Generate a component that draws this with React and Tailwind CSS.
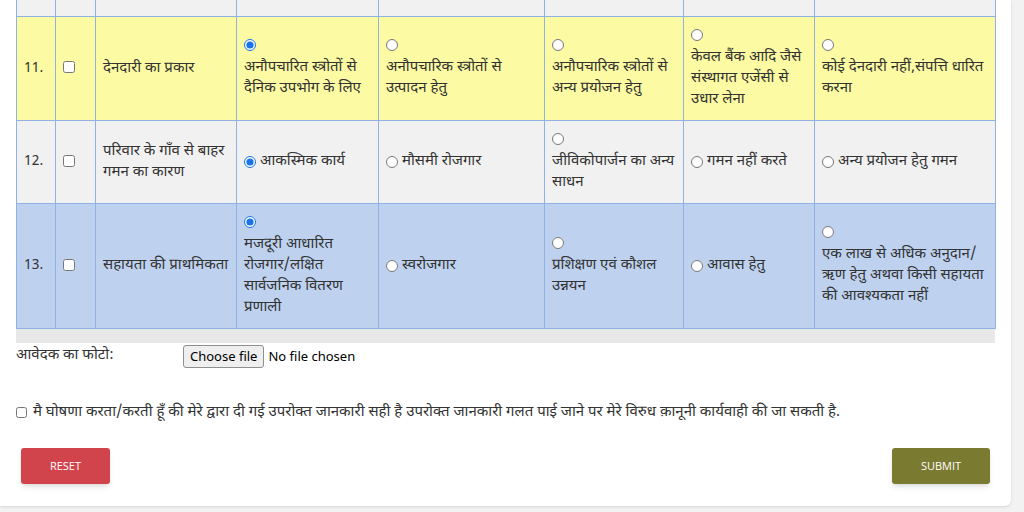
import React from 'react';

const rows = [
  {
    no: '11.',
    label: 'देनदारी का प्रकार',
    bg: 'bg-[#fcfaa2]',
    options: [
      { text: 'अनौपचारित स्त्रोतों से दैनिक उपभोग के लिए', top: true, checked: true },
      { text: 'अनौपचारिक स्त्रोतों से उत्पादन हेतु', top: true },
      { text: 'अनौपचारिक स्त्रोतों से अन्य प्रयोजन हेतु', top: true },
      { text: 'केवल बैंक आदि जैसे संस्थागत एजेंसी से उधार लेना', top: true },
      { text: 'कोई देनदारी नहीं,संपत्ति धारित करना', top: true },
    ],
  },
  {
    no: '12.',
    label: 'परिवार के गाँव से बाहर गमन का कारण',
    bg: 'bg-[#f1f1f1]',
    options: [
      { text: 'आकस्मिक कार्य', checked: true },
      { text: 'मौसमी रोजगार' },
      { text: 'जीविकोपार्जन का अन्य साधन', top: true },
      { text: 'गमन नहीं करते' },
      { text: 'अन्य प्रयोजन हेतु गमन' },
    ],
  },
  {
    no: '13.',
    label: 'सहायता की प्राथमिकता',
    bg: 'bg-[#bed2f0]',
    options: [
      { text: 'मजदूरी आधारित रोजगार/लक्षित सार्वजनिक वितरण प्रणाली', top: true, checked: true },
      { text: 'स्वरोजगार' },
      { text: 'प्रशिक्षण एवं कौशल उन्नयन', top: true },
      { text: 'आवास हेतु' },
      { text: 'एक लाख से अधिक अनुदान/ ऋण हेतु अथवा किसी सहायता की आवश्यकता नहीं', top: true },
    ],
  },
];

const widths = ['w-[39px]', 'w-[40px]', 'w-[141px]', 'w-[142px]', 'w-[166px]', 'w-[139px]', 'w-[131px]', 'w-[181px]'];

const cell = 'border border-[#8fb2e3] px-[7px] py-[10px] align-middle';

function Radio({ checked }) {
  return (
    <input
      type="radio"
      defaultChecked={checked}
      className="w-[12px] h-[12px] m-0 align-[-1px] accent-[#1a73e8]"
    />
  );
}

export default function App() {
  const hindi = { fontFamily: '"Noto Sans Devanagari", "Lohit Devanagari", "Noto Sans", sans-serif' };
  return (
    <div className="w-[1024px] h-[512px] overflow-hidden bg-[#f2f2f2]" style={{ fontFamily: '"Noto Sans", "Liberation Sans", sans-serif' }}>
      <div className="w-[1011px] h-[506px] bg-white rounded-br-md shadow-sm pl-4 pr-4 text-[#333]">
        <div className="w-[979px] bg-[#e8e8e8] pb-[14px]">
          <table className="border-collapse table-fixed w-[979px] text-[15px] leading-[21px]" style={hindi}>
            <colgroup>
              {widths.map((w, i) => (
                <col key={i} className={w} />
              ))}
            </colgroup>
            <tbody>
              <tr className="bg-[#f1f1f1] h-[16px]">
                {widths.map((w, i) => (
                  <td key={i} className="border border-[#8fb2e3] border-t-0" />
                ))}
              </tr>
              {rows.map((r) => (
                <tr key={r.no} className={r.bg}>
                  <td className={`${cell} text-[14px]`}>{r.no}</td>
                  <td className={cell}>
                    <input type="checkbox" className="w-[12px] h-[12px] m-0 align-middle" />
                  </td>
                  <td className={cell}>{r.label}</td>
                  {r.options.map((o, i) => (
                    <td key={i} className={cell}>
                      {o.top ? (
                        <>
                          <div className="leading-[20px]"><Radio checked={o.checked} /></div>
                          <div>{o.text}</div>
                        </>
                      ) : (
                        <span className="flex items-center gap-1">
                          <Radio checked={o.checked} />
                          {o.text}
                        </span>
                      )}
                    </td>
                  ))}
                </tr>
              ))}
            </tbody>
          </table>
        </div>

        <div className="flex items-center mt-[2px] h-[24px] text-[13px]">
          <span className="w-[167px] text-[15px]" style={hindi}>आवेदक का फोटो:</span>
          <span className="border border-[#8f8f8f] bg-[#efefef] rounded-[3px] px-[6px] h-[23px] flex items-center text-black">
            Choose file
          </span>
          <span className="ml-1 text-black">No file chosen</span>
        </div>

        <label className="flex items-center gap-[6px] mt-[33px] text-[15px] text-[#333]" style={hindi}>
          <input type="checkbox" className="w-[11px] h-[11px] m-0" />
          मै घोषणा करता/करती हूँ की मेरे द्वारा दी गई उपरोक्त जानकारी सही है उपरोक्त जानकारी गलत पाई जाने पर मेरे विरुध क़ानूनी कार्यवाही की जा सकती है.
        </label>

        <div className="flex justify-between mt-[24px] pl-[5px] pr-[5px]">
          <button className="w-[89px] h-[36px] bg-[#d2444c] text-white text-[11px] rounded-[3px] shadow-md" style={{ fontFamily: '"Open Sans", sans-serif' }}>
            RESET
          </button>
          <button className="w-[98px] h-[36px] bg-[#7a7a30] text-white text-[11px] rounded-[3px] shadow-md" style={{ fontFamily: '"Open Sans", sans-serif' }}>
            SUBMIT
          </button>
        </div>
      </div>
    </div>
  );
}
